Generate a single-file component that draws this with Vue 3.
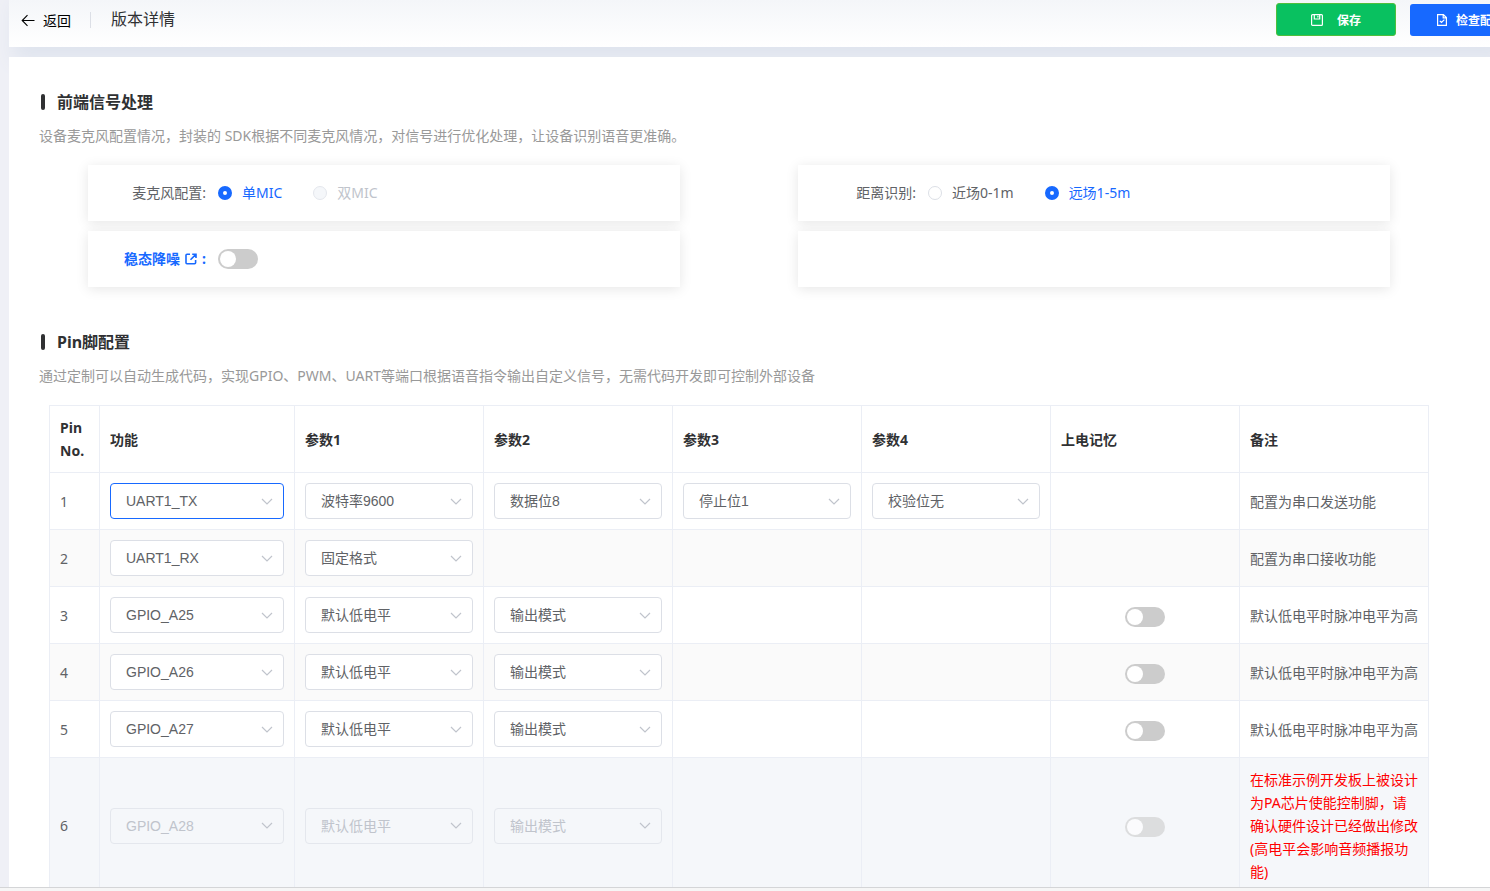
<script setup>
import { reactive } from 'vue';

const signal = reactive({
  mic: 'single',
  distance: 'far',
  denoise: false,
});

const columns = ['Pin No.', '功能', '参数1', '参数2', '参数3', '参数4', '上电记忆', '备注'];

const lowNote = '默认低电平时脉冲电平为高';

// params always holds 4 slots, an empty string means no select in that cell
const pins = reactive([
  { no: 1, func: 'UART1_TX', params: ['波特率9600', '数据位8', '停止位1', '校验位无'], note: '配置为串口发送功能', active: true },
  { no: 2, func: 'UART1_RX', params: ['固定格式', '', '', ''], note: '配置为串口接收功能' },
  { no: 3, func: 'GPIO_A25', params: ['默认低电平', '输出模式', '', ''], memory: false, hasMemory: true, note: lowNote },
  { no: 4, func: 'GPIO_A26', params: ['默认低电平', '输出模式', '', ''], memory: false, hasMemory: true, note: lowNote },
  { no: 5, func: 'GPIO_A27', params: ['默认低电平', '输出模式', '', ''], memory: false, hasMemory: true, note: lowNote },
  {
    no: 6,
    func: 'GPIO_A28',
    params: ['默认低电平', '输出模式', '', ''],
    memory: false,
    hasMemory: true,
    disabled: true,
    note: '在标准示例开发板上被设计为PA芯片使能控制脚，请确认硬件设计已经做出修改(高电平会影响音频播报功能)',
  },
]);
</script>

<template>
  <div class="page">
    <div class="scroll">
      <header class="topbar">
        <button class="back" type="button">
          <svg width="14" height="14" viewBox="0 0 14 14" fill="none" stroke="currentColor" stroke-width="1.1">
            <path d="M13.5 7.500H1.200M6.500 2.200L1.200 7.500l5.300 5.300" />
          </svg>
          <span>返回</span>
        </button>
        <span class="divider"></span>
        <h1>版本详情</h1>
        <div class="actions">
          <button class="save" type="button">
            <svg width="12" height="12" viewBox="0 0 12 12" fill="none" stroke="currentColor" stroke-width="1.2">
              <rect x="0.6" y="0.6" width="10.800" height="10.800" rx="1" />
              <path d="M3.300 0.600v4.400h5.400v-4.400M6.900 1.800v1.600" />
            </svg>
            <span>保存</span>
          </button>
          <button class="check" type="button">
            <svg width="12" height="12" viewBox="0 0 12 12" fill="none" stroke="currentColor" stroke-width="1.2">
              <path d="M1.600 0.600h5.800l3 3v7.800H1.600zM7.200 0.800v3h3M3.800 6.800l1.700 1.700l2.900-2.900" />
            </svg>
            <span>检查配置</span>
          </button>
        </div>
      </header>

      <main class="panel">
        <section>
          <h2>前端信号处理</h2>
          <p class="desc">设备麦克风配置情况，封装的 SDK根据不同麦克风情况，对信号进行优化处理，让设备识别语音更准确。</p>
          <div class="cards">
            <div class="card" role="radiogroup" aria-labelledby="micLabel">
              <span class="label" id="micLabel">麦克风配置:</span>
              <label class="radio"><input type="radio" name="mic" value="single" v-model="signal.mic"><span>单MIC</span></label>
              <label class="radio"><input type="radio" name="mic" value="double" v-model="signal.mic" disabled><span>双MIC</span></label>
            </div>
            <div class="card" role="radiogroup" aria-labelledby="distanceLabel">
              <span class="label" id="distanceLabel">距离识别:</span>
              <label class="radio"><input type="radio" name="distance" value="near" v-model="signal.distance"><span>近场0-1m</span></label>
              <label class="radio"><input type="radio" name="distance" value="far" v-model="signal.distance"><span>远场1-5m</span></label>
            </div>
            <div class="card">
              <a class="label link" href="#" id="denoiseLabel" @click.prevent>
                <span>稳态降噪</span>
                <svg width="12" height="12" viewBox="0 0 12 12" fill="none" stroke="currentColor" stroke-width="1.600">
                  <path d="M5 1.200H2q-1 0-1 1v7.600q0 1 1 1h7.600q1 0 1-1V7M7.200 1.200h3.800v3.800M10.800 1.400L5.500 6.700" />
                </svg>
                <span>:</span>
              </a>
              <input class="switch" type="checkbox" role="switch" aria-labelledby="denoiseLabel" v-model="signal.denoise">
            </div>
            <div class="card"></div>
          </div>
        </section>

        <section>
          <h2>Pin脚配置</h2>
          <p class="desc">通过定制可以自动生成代码，实现GPIO、PWM、UART等端口根据语音指令输出自定义信号，无需代码开发即可控制外部设备</p>
          <div class="table-wrap">
            <table>
              <colgroup>
                <col class="col-no">
                <col class="col-func">
                <col v-for="n in 6" :key="n">
              </colgroup>
              <thead>
                <tr>
                  <th v-for="name in columns" :key="name">{{ name }}</th>
                </tr>
              </thead>
              <tbody>
                <tr v-for="pin in pins" :key="pin.no" :class="{ disabled: pin.disabled }">
                  <td>{{ pin.no }}</td>
                  <td>
                    <div class="select" :class="{ active: pin.active }">
                      <select v-model="pin.func" :disabled="pin.disabled" :aria-label="'Pin ' + pin.no + ' 功能'">
                        <option>{{ pin.func }}</option>
                      </select>
                      <svg width="12" height="7" viewBox="0 0 12 7" fill="none" stroke="currentColor" stroke-width="1.2"><path d="M1 1l5 5l5-5" /></svg>
                    </div>
                  </td>
                  <td v-for="(param, i) in pin.params" :key="i">
                    <div class="select" v-if="param">
                      <select v-model="pin.params[i]" :disabled="pin.disabled" :aria-label="'Pin ' + pin.no + ' 参数' + (i + 1)">
                        <option>{{ param }}</option>
                      </select>
                      <svg width="12" height="7" viewBox="0 0 12 7" fill="none" stroke="currentColor" stroke-width="1.2"><path d="M1 1l5 5l5-5" /></svg>
                    </div>
                  </td>
                  <td class="memory">
                    <input v-if="pin.hasMemory" class="switch" type="checkbox" role="switch" v-model="pin.memory" :disabled="pin.disabled" :aria-label="'Pin ' + pin.no + ' 上电记忆'">
                  </td>
                  <td class="note">{{ pin.note }}</td>
                </tr>
              </tbody>
            </table>
          </div>
        </section>
      </main>
    </div>
    <div class="bottom-strip"></div>
  </div>
</template>

<style>
body {
  margin: 0;
  overflow: hidden;
}
</style>

<style scoped>
* {
  box-sizing: border-box;
}

.page {
  display: flex;
  flex-direction: column;
  height: 100vh;
  background: #eff0f6;
  color: #606266;
  font-family: "Noto Sans", "Noto Sans CJK SC", sans-serif;
  font-size: 14px;
  line-height: 23px;
}

.scroll {
  flex: 1;
  min-height: 0;
  padding-left: 9px;
  overflow-x: hidden;
  overflow-y: auto;
  scrollbar-width: none;
}

.bottom-strip {
  height: 4px;
  background: #f6f6f6;
  border-top: 1px solid #d4d5d7;
}

.topbar {
  display: flex;
  align-items: center;
  height: 47px;
  margin-bottom: 10px;
  padding: 0 0 8px 12px;
  background: linear-gradient(#f4f6f9, #fff);
  box-shadow: 10px 8px 20px 6px #dfe4ee;
}

button {
  display: flex;
  align-items: center;
  border: none;
  font-family: inherit;
  cursor: pointer;
}

.back {
  gap: 8px;
  padding: 0;
  background: none;
  color: #000;
  font-size: 14px;
}

.divider {
  width: 1px;
  height: 16px;
  margin: 0 20px 0 19px;
  background: #dcdfe6;
}

h1 {
  margin: 0;
  color: #303133;
  font-size: 16px;
  font-weight: 400;
}

.actions {
  display: flex;
  align-items: flex-end;
  gap: 14px;
  margin-left: auto;
  margin-right: -40px;
}

.actions button {
  flex-shrink: 0;
  justify-content: center;
  width: 120px;
  height: 32px;
  padding: 0;
  border-radius: 3px;
  color: #fff;
  font-size: 12px;
  font-weight: bold;
}

.actions .save {
  gap: 14px;
  height: 33px;
  border: 1px solid #4fbf3c;
  background: #09c160;
}

.actions .check {
  gap: 8px;
  background: #1769ff;
}

.panel {
  position: relative;
  padding: 33px 41px 40px 20px;
  background: #fff;
}

section {
  margin-bottom: 43px;
}

h2 {
  display: flex;
  align-items: center;
  gap: 12px;
  margin: 0 0 12px 12px;
  color: #303133;
  font-size: 16px;
  line-height: 24px;
}

h2::before {
  content: "";
  width: 4px;
  height: 16px;
  border-radius: 2px;
  background: #303133;
}

.desc {
  margin: 0 0 19px 10px;
  color: #999;
  line-height: 20px;
}

.cards {
  display: grid;
  grid-template-columns: 1fr 1fr;
  gap: 10px 118px;
  padding: 0 59px;
}

.card {
  display: flex;
  align-items: center;
  height: 56px;
  background: #fff;
  box-shadow: 0 2px 12px rgba(0, 0, 0, 0.1);
  line-height: 20px;
}

.label {
  width: 130px;
  padding-right: 12px;
  text-align: right;
}

.link {
  display: flex;
  align-items: center;
  justify-content: flex-end;
  gap: 5px;
  color: #1769ff;
  font-weight: bold;
  text-decoration: none;
}

.radio {
  display: flex;
  align-items: center;
  gap: 10px;
  margin-right: 31px;
  cursor: pointer;
}

.radio input {
  appearance: none;
  width: 14px;
  height: 14px;
  margin: 0;
  border: 1px solid #dcdfe6;
  border-radius: 50%;
  background: #fff;
}

.radio input:checked {
  border: 5px solid #1769ff;
}

.radio input:checked + span {
  color: #1769ff;
}

.radio input:disabled {
  border-color: #e4e7ed;
  background: #f5f7fa;
}

.radio input:disabled + span {
  color: #c0c4cc;
}

.switch {
  appearance: none;
  display: inline-flex;
  align-items: center;
  width: 40px;
  height: 20px;
  margin: 0;
  padding: 2px;
  border-radius: 10px;
  background: #ccc;
  vertical-align: middle;
  cursor: pointer;
}

.switch::before {
  content: "";
  width: 16px;
  height: 16px;
  border-radius: 50%;
  background: #fff;
}

.switch:checked {
  justify-content: flex-end;
  background: #1769ff;
}

.switch:disabled {
  opacity: 0.6;
}

.table-wrap {
  padding: 0 20px;
}

table {
  width: 100%;
  table-layout: fixed;
  border-collapse: separate;
  border-spacing: 0;
  border-top: 1px solid #ebeef5;
  border-left: 1px solid #ebeef5;
}

.col-no {
  width: 50px;
}

.col-func {
  width: 195px;
}

th,
td {
  padding: 10px;
  border-right: 1px solid #ebeef5;
  border-bottom: 1px solid #ebeef5;
  text-align: left;
  vertical-align: middle;
}

th {
  color: #303133;
}

tbody tr:nth-child(even) {
  background: #fafafa;
}

tbody tr.disabled {
  background: #f5f7fa;
}

.memory {
  text-align: center;
}

.disabled .note {
  color: #f00;
}

.select {
  display: grid;
  align-items: center;
  height: 36px;
}

.select select,
.select svg {
  grid-area: 1 / 1;
}

.select select {
  appearance: none;
  width: 100%;
  height: 36px;
  padding: 0 30px 0 15px;
  border: 1px solid #dcdfe6;
  border-radius: 4px;
  background: #fff;
  color: #606266;
  font-family: "Liberation Sans", "Noto Sans CJK SC", sans-serif;
  font-size: 14px;
  outline: none;
}

.select svg {
  justify-self: end;
  margin-right: 11px;
  color: #c0c4cc;
  pointer-events: none;
}

.select.active select {
  border-color: #1769ff;
}

.select select:disabled {
  border-color: #e4e7ed;
  background: #f5f7fa;
  color: #c0c4cc;
  opacity: 1;
}
</style>
